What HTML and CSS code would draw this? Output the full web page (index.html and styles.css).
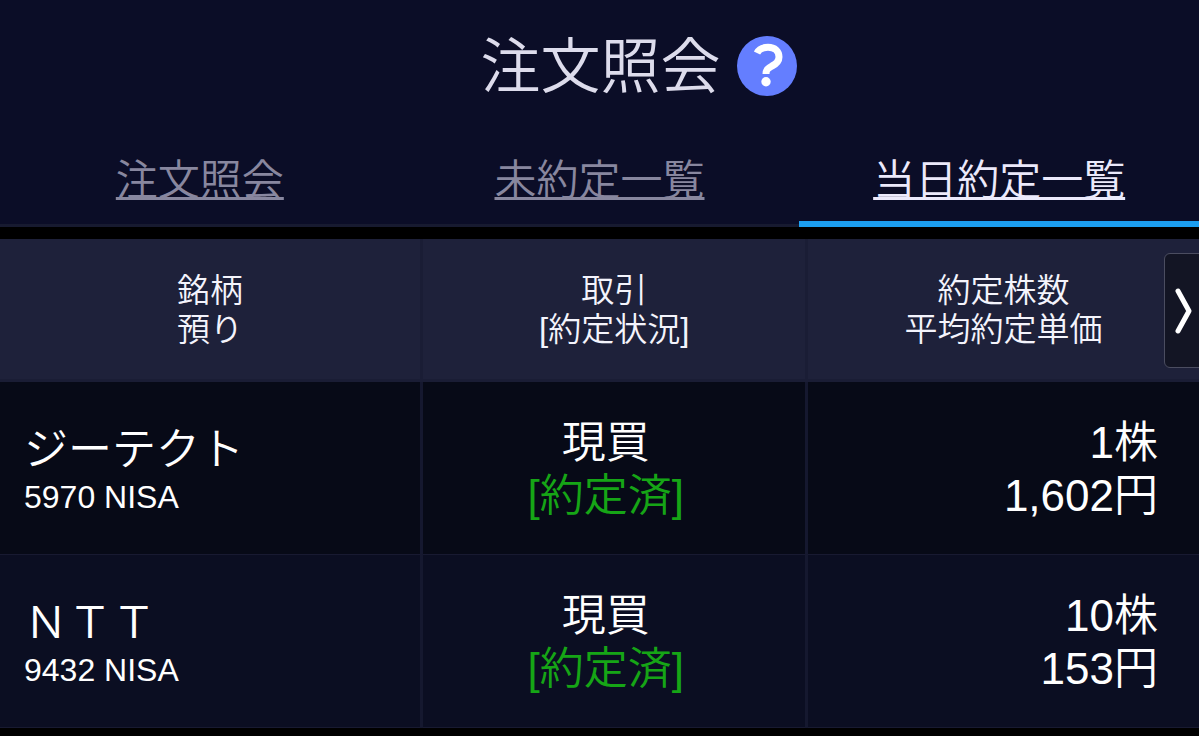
FILE: index.html
```html
<!DOCTYPE html>
<html lang="ja">
<head>
<meta charset="utf-8">
<meta name="viewport" content="width=device-width, initial-scale=1">
<title>注文照会</title>
<link rel="stylesheet" href="styles.css">
</head>
<body>
<header class="page-header">
  <div class="title-bar">
    <h1 class="title">注文照会</h1>
    <button class="help" type="button" aria-label="ヘルプ">
      <svg class="help-icon" viewBox="0 0 60 60" aria-hidden="true">
        <circle cx="30" cy="30" r="30" fill="#647eff"/>
        <path d="M20 17C22 13 26 11.300 31 11.300C38 11.300 42 15.500 42 21C42 25.500 39 28 35 30C30.500 32.500 29 34 29 38" fill="none" stroke="#fff" stroke-width="7" stroke-linejoin="round"/>
        <circle cx="29" cy="45.800" r="4.700" fill="#fff"/>
      </svg>
    </button>
  </div>
  <nav class="tabs">
    <div class="tab"><a class="tab-link" href="#inquiry">注文照会</a></div>
    <div class="tab"><a class="tab-link" href="#open">未約定一覧</a></div>
    <div class="tab tab-active"><a class="tab-link" href="#today" aria-current="page">当日約定一覧</a></div>
  </nav>
</header>
<main class="orders">
  <table class="order-table">
    <colgroup><col class="col-name"><col class="col-trade"><col class="col-price"></colgroup>
    <thead>
      <tr>
        <th scope="col">銘柄<br>預り</th>
        <th scope="col">取引<br>[約定状況]</th>
        <th scope="col">約定株数<br>平均約定単価</th>
      </tr>
    </thead>
    <tbody>
      <tr>
        <td class="name-cell"><div class="name">ジーテクト</div><div class="code">5970 NISA</div></td>
        <td class="trade-cell"><div>現買</div><div class="status">[約定済]</div></td>
        <td class="price-cell"><div>1株</div><div>1,602円</div></td>
      </tr>
      <tr>
        <td class="name-cell"><div class="name">ＮＴＴ</div><div class="code">9432 NISA</div></td>
        <td class="trade-cell"><div>現買</div><div class="status">[約定済]</div></td>
        <td class="price-cell"><div>10株</div><div>153円</div></td>
      </tr>
    </tbody>
  </table>
  <button class="scroll-next" type="button" aria-label="次の列">
    <svg class="chevron" viewBox="0 0 18 46" aria-hidden="true">
      <path d="M3 3L14 23L3 43" fill="none" stroke="#fff" stroke-width="5" stroke-linecap="round" stroke-linejoin="round"/>
    </svg>
  </button>
</main>
</body>
</html>
```
FILE: styles.css
```css
* {
  box-sizing: border-box;
}

body {
  margin: 0;
  background: #000;
  color: #fff;
  font-family: "Liberation Sans", "Noto Sans CJK JP DemiLight", "Noto Sans CJK JP", sans-serif;
  font-weight: 350;
}

.page-header {
  background: #0b0d27;
}

.title-bar {
  display: flex;
  align-items: center;
  justify-content: center;
  gap: 16px;
  padding-left: 78px;
  height: 132px;
}

.title {
  margin: 0;
  padding-bottom: 8px;
  color: #dddcec;
  font-family: "Noto Sans CJK JP DemiLight", "Noto Sans CJK JP", sans-serif;
  font-size: 60px;
  font-weight: 350;
  line-height: 80px;
}

.help {
  padding: 0;
  border: 0;
  background: none;
}

.help-icon {
  display: block;
  width: 60px;
  height: 60px;
}

.tabs {
  display: grid;
  grid-template-columns: repeat(3, 1fr);
}

.tab {
  height: 95px;
  padding-top: 19px;
  border-bottom: 3px solid #171a30;
  font-size: 42px;
  line-height: 60px;
  text-align: center;
}

.tab-active {
  border-bottom: 6px solid #1c9ff0;
}

.tab-link {
  color: #88879f;
  text-decoration: underline;
  text-decoration-thickness: 3px;
  text-underline-offset: 2px;
  text-decoration-skip-ink: none;
}

.tab-active .tab-link {
  color: #ebe9fb;
}

.orders {
  position: relative;
  margin-top: 12px;
  overflow: hidden;
}

.order-table {
  width: 100%;
  table-layout: fixed;
  border-collapse: separate;
  border-spacing: 0;
}

.col-name {
  width: 35.3%;
}

.col-trade {
  width: 32.1%;
}

th,
td {
  border-right: 3px solid #15182f;
}

th:last-child,
td:last-child {
  border-right: 0;
}

th {
  height: 143px;
  padding: 2px 0 0;
  border-right-color: #1a1d35;
  border-bottom: 3px solid #1a1d35;
  background: #1e213a;
  color: #f4f4fc;
  font-size: 33px;
  font-weight: 350;
  line-height: 39px;
}

td {
  height: 173px;
  border-bottom: 1px solid #181a31;
  background: #070a17;
  font-size: 44px;
  line-height: 53px;
}

tr:nth-child(even) td {
  background: #0b0e22;
}

.name-cell {
  padding: 4px 24px 0;
}

.name {
  font-weight: 400;
  line-height: 54px;
}

.code {
  font-size: 32px;
  line-height: 40px;
}

.trade-cell {
  padding: 2px 17px 0 0;
  text-align: center;
}

.status {
  color: #16a516;
}

.price-cell {
  padding: 2px 41px 0 0;
  text-align: right;
}

.scroll-next {
  position: absolute;
  top: 14px;
  right: -6px;
  display: flex;
  align-items: center;
  width: 41px;
  height: 115px;
  padding: 0 0 0 10px;
  border: 1px solid #4b4d60;
  border-radius: 6px;
  background: #131524;
}

.chevron {
  width: 18px;
  height: 46px;
}
```
